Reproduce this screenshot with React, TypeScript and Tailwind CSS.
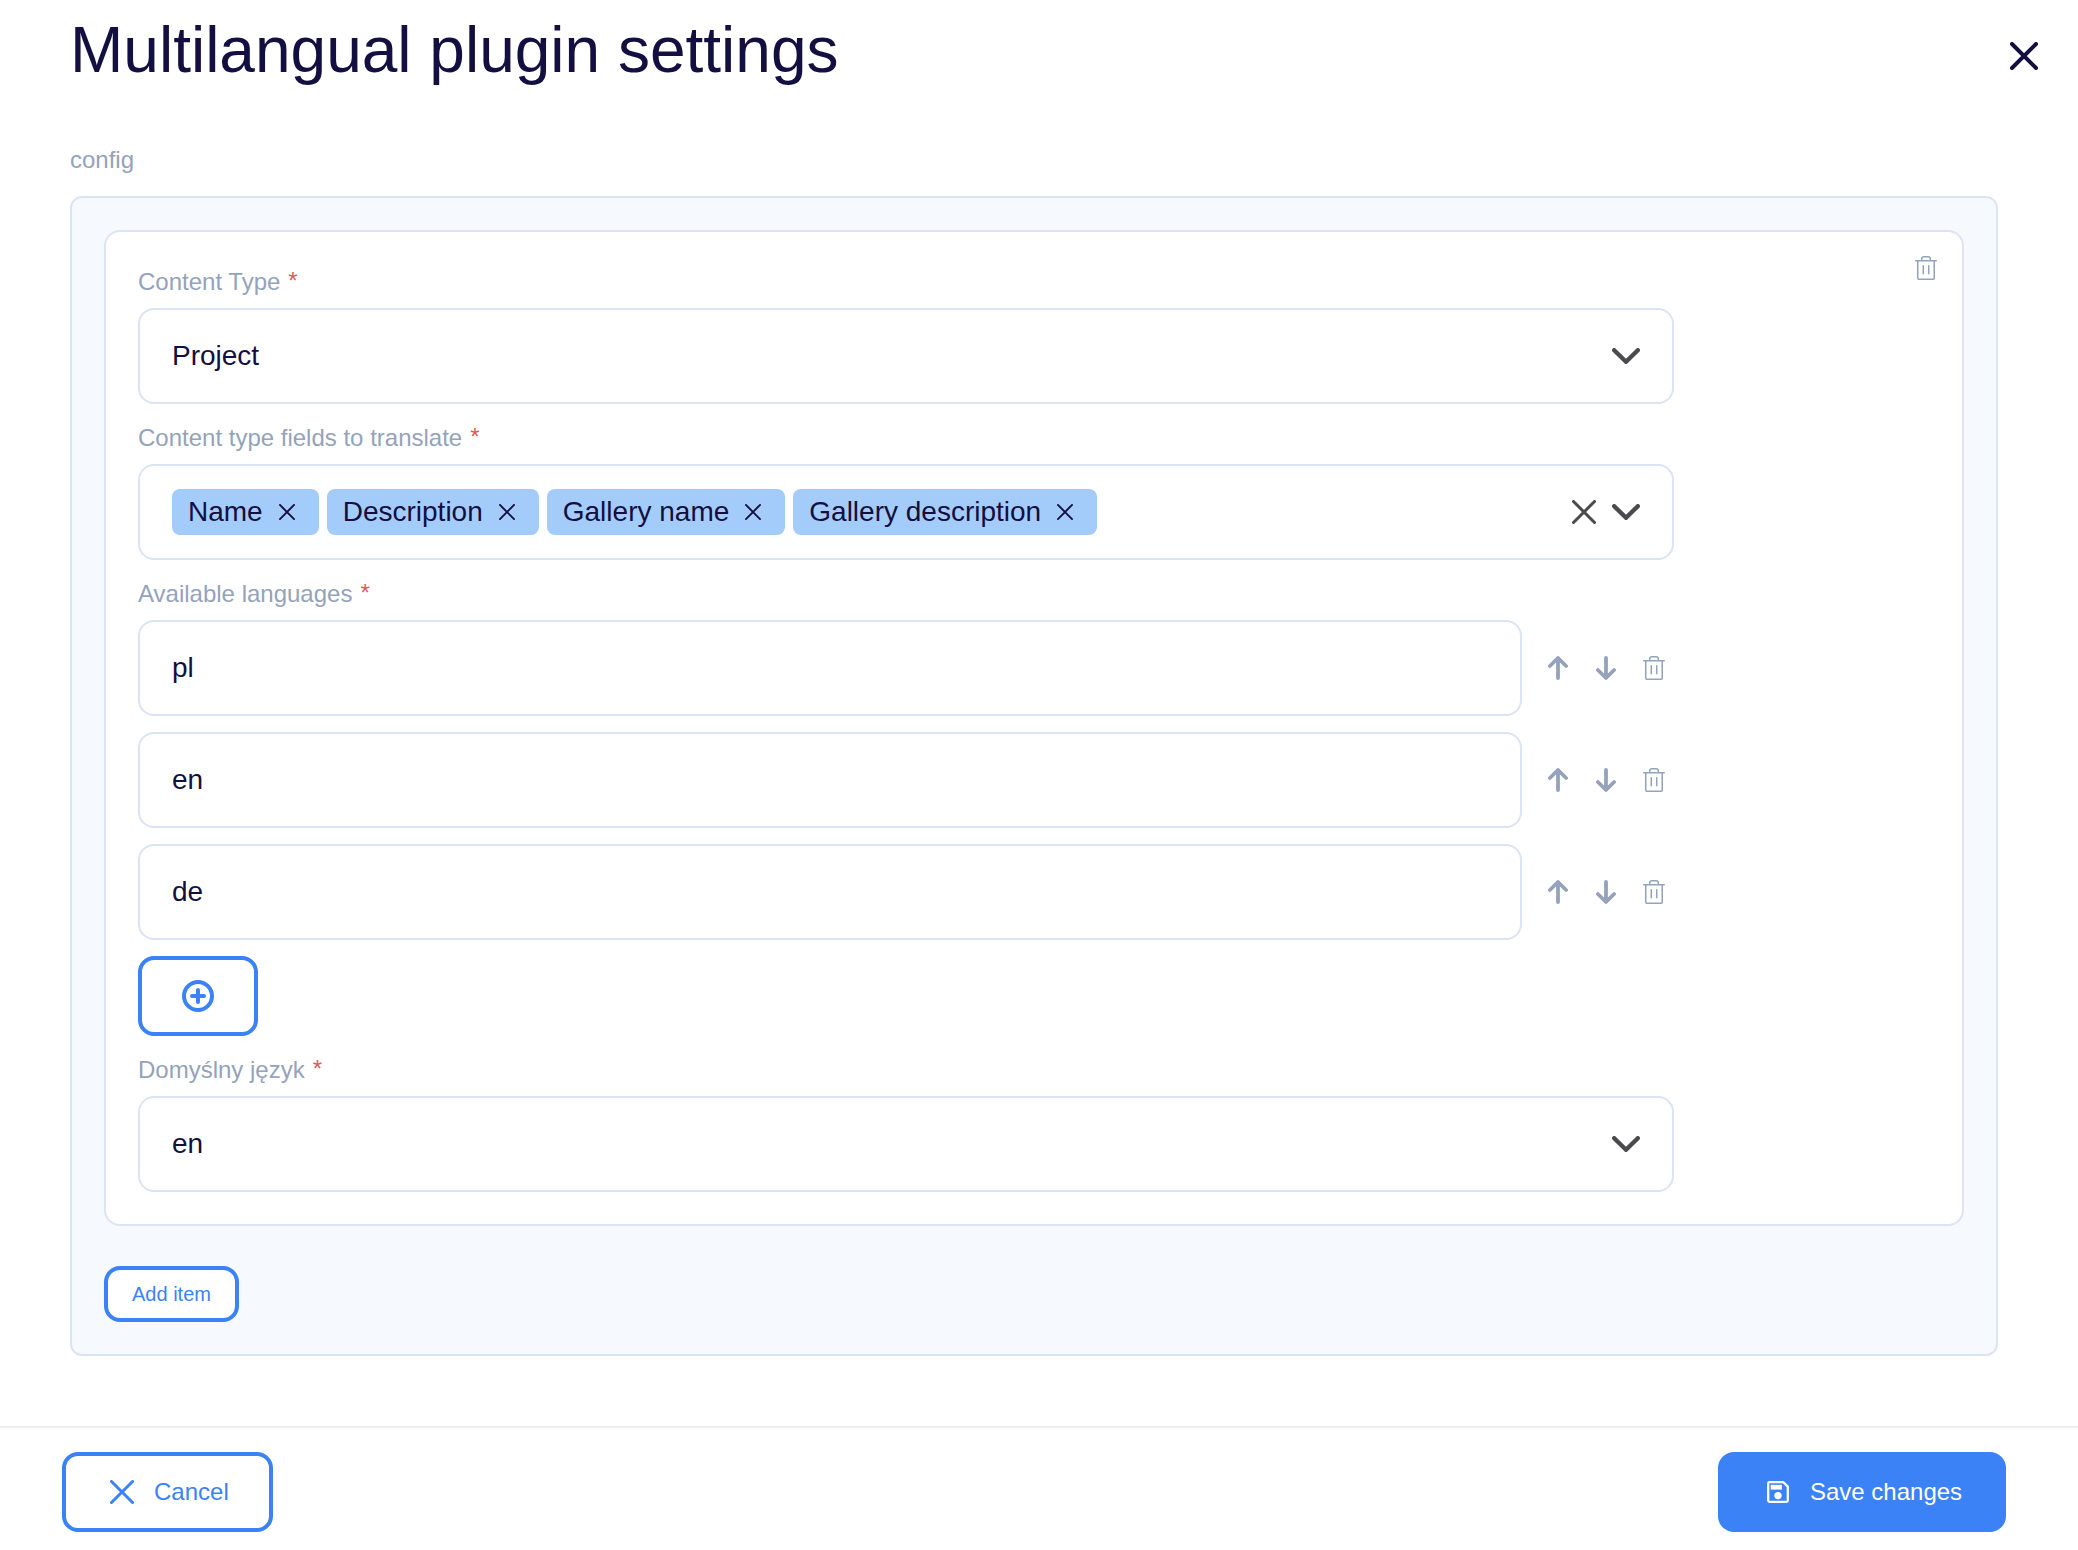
import React from "react";

type IconProps = { className?: string };

function Cross({ size, stroke, className }: { size: number; stroke: number; className?: string }) {
  const a = stroke / 2;
  const b = size - stroke / 2;
  return (
    <svg width={size} height={size} viewBox={`0 0 ${size} ${size}`} fill="none" stroke="currentColor" strokeWidth={stroke} strokeLinecap="round" className={className}>
      <path d={`M${a} ${a}L${b} ${b}M${b} ${a}L${a} ${b}`} />
    </svg>
  );
}

function Chevron({ className }: IconProps) {
  return (
    <svg width="28" height="16" viewBox="0 0 28 16" fill="none" stroke="currentColor" strokeWidth="4.4" strokeLinecap="round" strokeLinejoin="round" className={className}>
      <path d="M2.2 2.2L14 13.8L25.8 2.2" />
    </svg>
  );
}

function Trash({ className }: IconProps) {
  return (
    <svg width="22" height="24" viewBox="0 0 22 24" fill="none" stroke="currentColor" strokeWidth="1.5" strokeLinecap="round" className={className}>
      <path d="M0.75 4.75H21.25M2.75 4.75V22.25Q2.75 23.25 3.75 23.25H18.25Q19.25 23.25 19.25 22.25V4.75M6.75 4.5V2.75Q6.75 0.75 8.75 0.75H13.25Q15.25 0.75 15.25 2.75V4.5M8.25 9.75V17.75M13.75 9.75V17.75" />
    </svg>
  );
}

function Arrow({ down }: { down?: boolean }) {
  return (
    <svg width="20" height="24" viewBox="0 0 20 24" fill="none" stroke="currentColor" strokeWidth="3.8" strokeLinecap="round" strokeLinejoin="round" className={down ? "rotate-180" : ""}>
      <path d="M10 22.1V2.2M1.9 10L10 2L18.1 10" />
    </svg>
  );
}

function PlusCircle() {
  return (
    <svg width="32" height="32" viewBox="0 0 32 32" fill="none" stroke="currentColor" strokeWidth="4" strokeLinecap="round">
      <circle cx="16" cy="16" r="14" />
      <path d="M16 10V22M10 16H22" />
    </svg>
  );
}

function Save() {
  return (
    <svg width="22" height="22" viewBox="0 0 22 22" fill="none">
      <path d="M2.5 1.2H16.4L20.8 5.6V19.5Q20.8 20.8 19.5 20.8H2.5Q1.2 20.8 1.2 19.5V2.5Q1.2 1.2 2.5 1.2Z" stroke="currentColor" strokeWidth="2.3" strokeLinejoin="round" />
      <rect x="3.7" y="3.8" width="11.2" height="4.8" fill="currentColor" />
      <circle cx="11" cy="14.6" r="3.7" fill="currentColor" />
    </svg>
  );
}

function Label({ children }: { children: React.ReactNode }) {
  return (
    <div className="mb-2 flex h-9 items-center gap-2 text-2xl leading-9 text-[#94a3bb]">
      <span>{children}</span>
      <span className="-mt-0.5 text-[#e05a5a]">*</span>
    </div>
  );
}

function Box({ children }: { children: React.ReactNode }) {
  return (
    <div className="flex h-24 flex-1 items-center rounded-2xl border-2 border-[#dbe4f2] bg-white px-8 text-[28px]">
      {children}
    </div>
  );
}

const chips = ["Name", "Description", "Gallery name", "Gallery description"];
const languages = ["pl", "en", "de"];

export default function App() {
  return (
    <div className="flex h-[1550px] w-[2078px] flex-col bg-white font-['Liberation_Sans',Arial,sans-serif] text-[#130f40]">
      <header className="flex h-[100px] shrink-0 items-center justify-between pr-10 pl-[70px]">
        <h1 className="text-[64px] leading-none">Multilangual plugin settings</h1>
        <button className="mt-3">
          <Cross size={28} stroke={4} />
        </button>
      </header>

      <main className="flex-1 pr-20 pl-[70px]">
        <div className="mt-[42px] mb-[18px] text-2xl leading-9 text-[#94a3bb]">config</div>
        <section className="h-[1160px] rounded-xl border-2 border-[#dbe4f2] bg-[#f6f9fe] p-8">
          <div className="flex items-start justify-between rounded-2xl border-2 border-[#dbe4f2] bg-white p-8">
            <div className="flex w-[1536px] flex-col gap-4">
              <div>
                <Label>Content Type</Label>
                <Box>
                  <span className="flex-1">Project</span>
                  <Chevron className="text-[#4b4b4f]" />
                </Box>
              </div>
              <div>
                <Label>Content type fields to translate</Label>
                <Box>
                  <div className="flex flex-1 gap-2">
                    {chips.map((chip) => (
                      <span key={chip} className="flex h-[46px] items-center gap-4 rounded-lg bg-[#a4ccfb] pr-6 pl-4">
                        {chip}
                        <Cross size={16} stroke={1.9} />
                      </span>
                    ))}
                  </div>
                  <div className="flex items-center gap-4 text-[#4b4b4f]">
                    <Cross size={24} stroke={3} />
                    <Chevron />
                  </div>
                </Box>
              </div>
              <div>
                <Label>Available languages</Label>
                <div className="flex flex-col gap-4">
                  {languages.map((lang) => (
                    <div key={lang} className="flex items-center">
                      <Box>{lang}</Box>
                      <div className="ml-[26px] flex w-[126px] items-center text-[#94a3bb]">
                        <Arrow />
                        <span className="ml-7">
                          <Arrow down />
                        </span>
                        <Trash className="ml-[27px]" />
                      </div>
                    </div>
                  ))}
                  <button className="flex h-20 w-[120px] items-center justify-center rounded-2xl border-4 border-[#3b82f6] text-[#3b82f6]">
                    <PlusCircle />
                  </button>
                </div>
              </div>
              <div>
                <Label>Domyślny język</Label>
                <Box>
                  <span className="flex-1">en</span>
                  <Chevron className="text-[#4b4b4f]" />
                </Box>
              </div>
            </div>
            <Trash className="-mt-2 -mr-[7px] text-[#94a3bb]" />
          </div>
          <button className="mt-10 flex h-14 w-[135px] items-center justify-center rounded-2xl border-4 border-[#3b82f6] bg-white text-xl text-[#3b82f6]">
            Add item
          </button>
        </section>
      </main>

      <footer className="flex h-[124px] shrink-0 items-start justify-between border-t-2 border-[#ebedf2] pt-6 pr-[72px] pl-[62px] text-2xl">
        <button className="flex h-20 w-[211px] items-center gap-5 rounded-2xl border-4 border-[#3b82f6] pl-11 text-[#3b82f6]">
          <Cross size={24} stroke={3} />
          Cancel
        </button>
        <button className="flex h-20 w-72 items-center gap-[21px] rounded-2xl bg-[#3b82f6] pl-[49px] text-white">
          <Save />
          Save changes
        </button>
      </footer>
    </div>
  );
}
